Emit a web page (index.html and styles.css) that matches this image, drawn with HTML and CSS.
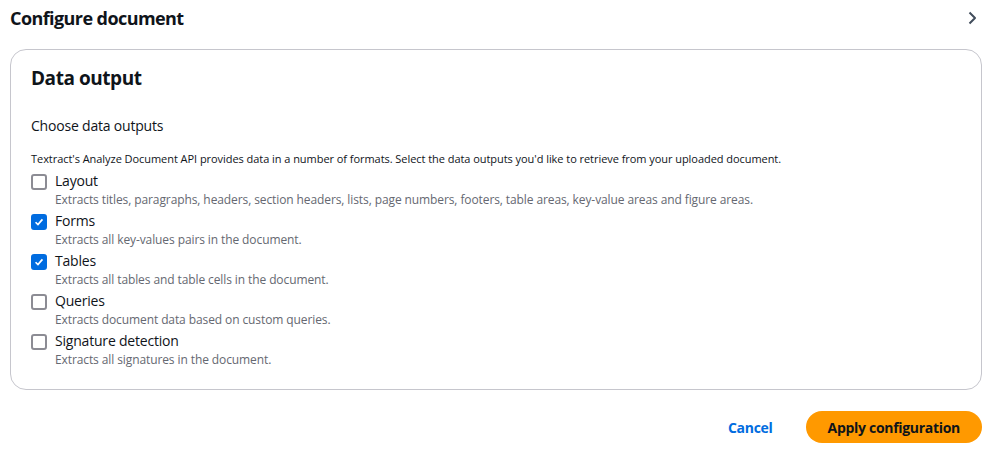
FILE: index.html
```html
<!DOCTYPE html>
<html lang="en">
<head>
  <meta charset="UTF-8">
  <title>Configure document</title>
  <link rel="stylesheet" href="styles.css">
</head>
<body>
  <div class="page">
    <div class="page-header">
      <h2>Configure document</h2>
      <svg class="chevron" width="16" height="16" viewBox="0 0 16 16"><path d="M5.5 2.5 11 8l-5.5 5.5" fill="none" stroke="#414d5c" stroke-width="2" stroke-linejoin="round"/></svg>
    </div>

    <div class="container">
      <h3>Data output</h3>
      <div class="field-label">Choose data outputs</div>
      <div class="field-desc">Textract's Analyze Document API provides data in a number of formats. Select the data outputs you'd like to retrieve from your uploaded document.</div>

      <div class="options">
        <label class="option">
          <span class="box"></span>
          <span class="text">
            <span class="name">Layout</span>
            <span class="hint">Extracts titles, paragraphs, headers, section headers, lists, page numbers, footers, table areas, key-value areas and figure areas.</span>
          </span>
        </label>
        <label class="option">
          <span class="box checked"><svg viewBox="0 0 14 14"><path d="M3 7.3 5.8 10 11 4" fill="none" stroke="#fff" stroke-width="2"/></svg></span>
          <span class="text">
            <span class="name">Forms</span>
            <span class="hint">Extracts all key-values pairs in the document.</span>
          </span>
        </label>
        <label class="option">
          <span class="box checked"><svg viewBox="0 0 14 14"><path d="M3 7.3 5.8 10 11 4" fill="none" stroke="#fff" stroke-width="2"/></svg></span>
          <span class="text">
            <span class="name">Tables</span>
            <span class="hint">Extracts all tables and table cells in the document.</span>
          </span>
        </label>
        <label class="option">
          <span class="box"></span>
          <span class="text">
            <span class="name">Queries</span>
            <span class="hint">Extracts document data based on custom queries.</span>
          </span>
        </label>
        <label class="option">
          <span class="box"></span>
          <span class="text">
            <span class="name">Signature detection</span>
            <span class="hint">Extracts all signatures in the document.</span>
          </span>
        </label>
      </div>
    </div>

    <div class="actions">
      <button class="btn-link">Cancel</button>
      <button class="btn-primary">Apply configuration</button>
    </div>
  </div>
</body>
</html>
```

FILE: styles.css
```css
body {
  margin: 0;
  font-family: "Open Sans", "Noto Sans", sans-serif;
  color: #0f141a;
  background: #fff;
}

.page {
  padding: 6px 10px 0 10px;
}

.page-header {
  display: flex;
  justify-content: space-between;
  align-items: center;
  height: 24px;
}

.page-header h2 {
  margin: 0;
  font-size: 18px;
  font-weight: 700;
  letter-spacing: -0.58px;
}

.chevron {
  margin-right: 2px;
}

.container {
  margin-top: 19px;
  border: 1px solid #c6c6cd;
  border-radius: 16px;
  padding: 16px 20px 24px 20px;
  height: 299px;
}

.container h3 {
  margin: 0;
  font-size: 19px;
  font-weight: 700;
  line-height: 24px;
  letter-spacing: -0.45px;
}

.field-label {
  margin-top: 26px;
  font-size: 14px;
  line-height: 20px;
  letter-spacing: -0.2px;
}

.field-desc {
  margin-top: 15px;
  font-size: 11px;
  line-height: 16px;
  letter-spacing: -0.05px;
}

.options {
  display: flex;
  flex-direction: column;
  gap: 1px;
  margin-top: 4px;
}

.option {
  display: flex;
  gap: 8px;
  height: 39px;
}

.box {
  flex: none;
  width: 12px;
  height: 12px;
  margin-top: 3px;
  border: 2px solid #8c8c94;
  border-radius: 3px;
  display: flex;
  align-items: center;
  justify-content: center;
}

.box.checked {
  background: #006ce0;
  border-color: #006ce0;
}

.box svg {
  width: 14px;
  height: 14px;
}

.text {
  display: flex;
  flex-direction: column;
}

.name {
  font-size: 14px;
  line-height: 20px;
  letter-spacing: -0.2px;
}

.hint {
  font-size: 12px;
  line-height: 18px;
  color: #656871;
  letter-spacing: -0.1px;
}

.actions {
  display: flex;
  justify-content: flex-end;
  align-items: center;
  gap: 33px;
  margin-top: 21px;
}

.btn-link {
  background: none;
  border: none;
  font-family: inherit;
  font-size: 14px;
  font-weight: 700;
  color: #006ce0;
  letter-spacing: -0.3px;
  padding: 0;
}

.btn-primary {
  background: #ff9900;
  border: none;
  border-radius: 16px;
  font-family: inherit;
  font-size: 14px;
  font-weight: 700;
  color: #0f141a;
  letter-spacing: -0.3px;
  height: 32px;
  padding: 0 22px;
}
```
